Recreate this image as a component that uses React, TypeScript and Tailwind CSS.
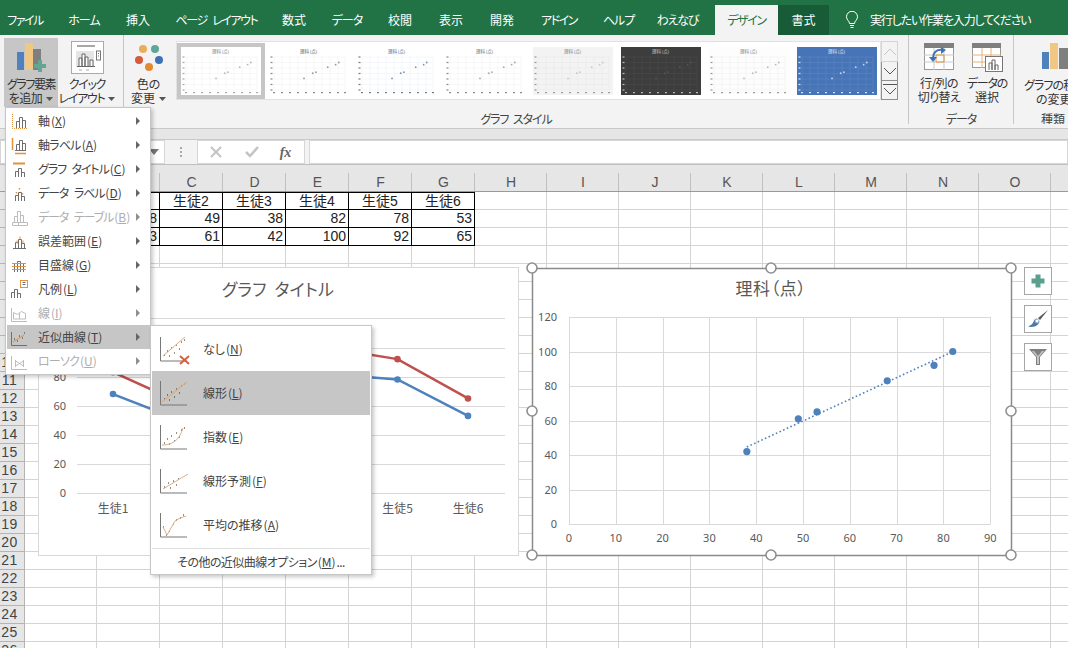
import React from "react";

const COLS = [
  { l: "", w: "w-[72px]" }, { l: "", w: "w-[63px]" }, { l: "C", w: "w-[63px]" }, { l: "D", w: "w-[63px]" },
  { l: "E", w: "w-[63px]" }, { l: "F", w: "w-[63px]" }, { l: "G", w: "w-[63px]" }, { l: "H", w: "w-[72px]" },
  { l: "I", w: "w-[72px]" }, { l: "J", w: "w-[72px]" }, { l: "K", w: "w-[72px]" }, { l: "L", w: "w-[72px]" },
  { l: "M", w: "w-[72px]" }, { l: "N", w: "w-[72px]" }, { l: "O", w: "w-[72px]" }, { l: "", w: "w-[72px]" },
];

const TABLE: Record<number, string[]> = {
  0: ["", "生徒2", "生徒3", "生徒4", "生徒5", "生徒6"],
  1: ["68", "49", "38", "82", "78", "53"],
  2: ["83", "61", "42", "100", "92", "65"],
};

const TABS = [
  { t: "ファイル", w: "w-[50px]", k: "tracking-[-1.5px]" }, { t: "ホーム", w: "w-[68px]", k: "tracking-[-1px]" },
  { t: "挿入", w: "w-[40px]", k: "" }, { t: "ページ レイアウト", w: "w-[117px]", k: "tracking-[-1.4px] [word-spacing:4px]" },
  { t: "数式", w: "w-[38px]", k: "" }, { t: "データ", w: "w-[68px]", k: "tracking-[-1px]" },
  { t: "校閲", w: "w-[38px]", k: "" }, { t: "表示", w: "w-[64px]", k: "" },
  { t: "開発", w: "w-[38px]", k: "" }, { t: "アドイン", w: "w-[76px]", k: "tracking-[-1.5px]" },
  { t: "ヘルプ", w: "w-[43px]", k: "tracking-[-1px]" }, { t: "わえなび", w: "w-[75px]", k: "tracking-[-1.2px]" },
];

function Tabs() {
  return (
    <div className="flex h-[35px] shrink-0 items-end bg-[#217346] text-[12px] text-white">
      {TABS.map((x) => (
        <div key={x.t} className={`${x.w} ${x.k} h-[30px] whitespace-nowrap pt-[6px] text-center leading-[18px]`}>{x.t}</div>
      ))}
      <div className="h-[30px] w-[63px] bg-[#f3f3f3] pt-[6px] text-center leading-[18px] tracking-[-1.4px] text-[#217346]">デザイン</div>
      <div className="h-[30px] w-[51px] bg-[#185c37] pt-[6px] text-center leading-[18px]">書式</div>
      <div className="flex h-[30px] items-center pl-[16px] pb-[1px]">
        <svg width="14" height="18" viewBox="0 0 14 18" fill="none" stroke="#fff" strokeWidth="1">
          <path d="M4.5 12.5C4.5 10 1.5 9 1.5 5.8a5.5 5.5 0 0 1 11 0C12.5 9 9.5 10 9.5 12.5ZM5 14.5h4M5.5 16.5h3" />
        </svg>
        <span className="ml-[11px] whitespace-nowrap tracking-[-1.15px]">実行したい作業を入力してください</span>
      </div>
    </div>
  );
}

function Thumb({ bg, line, title, dot, axis }: { bg: string; line: string; title: string; dot: string; axis: string }) {
  const pts: [number, number][] = [[38, 42], [49, 61], [53, 65], [68, 83], [78, 92], [82, 100]];
  return (
    <svg width="80" height="48" viewBox="0 0 80 48" className="block shrink-0">
      <rect width="80" height="48" fill={bg} />
      {[10, 15.5, 21, 26.5, 32, 37.5, 43].map((y) => <path key={y} d={`M5 ${y}H76`} stroke={line} strokeWidth=".5" />)}
      {[5, 13, 21, 29, 37, 45, 53, 61, 69, 76].map((x) => <path key={x} d={`M${x} 10V43`} stroke={line} strokeWidth=".5" />)}
      {[10, 15.5, 21, 26.5, 32, 37.5, 43].map((y) => <rect key={y} x="1.5" y={y - 0.6} width="2" height="1.2" fill={axis} />)}
      {[5, 13, 21, 29, 37, 45, 53, 61, 69, 76].map((x) => <rect key={x} x={x - 1} y="45" width="2" height="1.2" fill={axis} />)}
      {pts.map(([a, b]) => <circle key={a} cx={5 + a * 0.79} cy={43 - b * 0.275} r=".9" fill={dot} />)}
      <text x="40" y="6" textAnchor="middle" fontSize="4.5" fill={title}>理科（点）</text>
    </svg>
  );
}

function Gallery() {
  const items = [
    { bg: "#ffffff", line: "#eeeeee", title: "#777", dot: "#b8b8b8", axis: "#aaa" },
    { bg: "#ffffff", line: "#eeeeee", title: "#555", dot: "#999", axis: "#888" },
    { bg: "#ffffff", line: "#e8edf5", title: "#44608c", dot: "#7d93b5", axis: "#777" },
    { bg: "#ffffff", line: "#eeeeee", title: "#666", dot: "#aaa", axis: "#888" },
    { bg: "#f3f3f3", line: "#e6e6e6", title: "#777", dot: "#c8c8c8", axis: "#999" },
    { bg: "#3d3d3d", line: "#4c4c4c", title: "#ccc", dot: "#555", axis: "#bbb" },
    { bg: "#fdfdfd", line: "#eeeeee", title: "#777", dot: "#bbb", axis: "#999" },
    { bg: "#4674b7", line: "#5f88c4", title: "#e8eef8", dot: "#c5d5eb", axis: "#dce6f3" },
  ];
  return (
    <div className="ml-[3px] mt-[6px] flex h-[59px] w-[705px] items-center gap-[8px] border border-[#e2e2e2] bg-white pl-[4px]">
      {items.map((p, i) => (
        <div key={i} className={i === 0 ? "-mx-[4px] border-[4px] border-[#c6c6c6]" : "ml-0"}>
          <Thumb {...p} />
        </div>
      ))}
    </div>
  );
}

function ScrollArrows() {
  return (
    <div className="mt-[6px] flex w-[17px] flex-col">
      <div className="flex h-[21px] items-center justify-center border border-[#d4d4d4] bg-[#f3f3f3]">
        <svg width="14" height="10" viewBox="0 0 14 10" fill="none" stroke="#c6c6c6"><path d="M1 8l6-6 6 6" /></svg>
      </div>
      <div className="flex h-[19px] items-center justify-center border-x border-b border-[#8f8f8f] bg-[#f3f3f3]">
        <svg width="14" height="10" viewBox="0 0 14 10" fill="none" stroke="#555"><path d="M1 2l6 6 6-6" /></svg>
      </div>
      <div className="flex h-[19px] flex-col items-center border-x border-b border-[#8f8f8f] bg-[#f3f3f3] pt-[2px]">
        <svg width="14" height="14" viewBox="0 0 14 14" fill="none" stroke="#555"><path d="M0 1.5h14M1 5l6 6 6-6" /></svg>
      </div>
    </div>
  );
}

const GroupLabel = ({ children, extra = "" }: { children: React.ReactNode; extra?: string }) => (
  <div className={`h-[17px] shrink-0 whitespace-nowrap pt-[2px] text-center text-[12px] leading-[17px] tracking-[-1.1px] [word-spacing:3px] text-[#444] ${extra}`}>{children}</div>
);

const Caret = () => (
  <svg width="7" height="4" viewBox="0 0 7 4" className="ml-[4px] inline-block align-[2px]"><path d="M0 0h7L3.5 4z" fill="#555" /></svg>
);

function Ribbon() {
  return (
    <div className="flex h-[94px] shrink-0 border-b border-[#c9c9c9] bg-[#f3f3f3] text-[12px] leading-[14px] text-[#333]">
      <div className="mb-[4px] flex w-[124px] shrink-0 border-r border-[#c6c6c6] pl-[4px] pt-[3px]">
        <div className="flex h-[69px] w-[54px] flex-col items-center bg-[#c6c6c6] pt-[5px]">
          <svg width="30" height="30" viewBox="0 0 30 30" className="shrink-0">
            <rect x="1" y="9" width="7" height="18" fill="#4f81bd" />
            <rect x="9" y="0" width="8" height="27" fill="#f0c884" />
            <rect x="17" y="6" width="8" height="21" fill="#7f7f7f" />
            <path d="M19 24h4v-4h4v4h4v4h-4v4h-4v-4h-4z" transform="translate(-1 -3)" fill="#62a595" />
          </svg>
          <div className="whitespace-nowrap pt-[4px] text-center tracking-[-1.4px]">グラフ要素</div>
          <div className="whitespace-nowrap text-center tracking-[-0.4px]">を追加<Caret /></div>
        </div>
        <div className="flex w-[58px] flex-col items-center pt-[3px]">
          <svg width="33" height="33" viewBox="0 0 33 33" className="shrink-0">
            <rect x=".5" y=".5" width="32" height="32" fill="#fff" stroke="#aaa" />
            <path d="M6 5h18" stroke="#8a8a8a" strokeWidth="1.5" />
            <rect x="5" y="10" width="18" height="16" fill="#e5e5e5" />
            <path d="M8 25V17h3v8M11 25V13h3v12M14 25v-9h3v9M19 25v-6h3v6M6 25.5h18" fill="#fff" stroke="#666" />
            <rect x="25.5" y="10" width="4" height="9" fill="#fff" stroke="#777" />
            <path d="M27 12.5h1M27 15h1" stroke="#777" />
            <path d="M8 29h3M15 29h3" stroke="#aaa" />
          </svg>
          <div className="whitespace-nowrap pt-[3px] text-center tracking-[-1.3px]">クイック</div>
          <div className="whitespace-nowrap text-center tracking-[-1.3px]">レイアウト<Caret /></div>
        </div>
      </div>

      <div className="mb-[4px] flex w-[785px] shrink-0 flex-col border-r border-[#c6c6c6]">
        <div className="flex h-[73px] shrink-0">
          <div className="flex w-[49px] shrink-0 flex-col items-center pt-[8px]">
            <svg width="30" height="30" viewBox="0 0 30 30" className="shrink-0">
              <circle cx="9" cy="6" r="4" fill="#e9ae5b" />
              <circle cx="21" cy="6" r="4" fill="#5fa79a" />
              <circle cx="5" cy="17" r="4" fill="#d65a3c" />
              <circle cx="25" cy="17" r="4" fill="#3f71b5" />
              <circle cx="15" cy="24" r="4" fill="#e28a2f" />
            </svg>
            <div className="whitespace-nowrap pt-[4px] text-center">色の</div>
            <div className="whitespace-nowrap text-center">変更<Caret /></div>
          </div>
          <Gallery />
          <ScrollArrows />
        </div>
        <GroupLabel>グラフ スタイル</GroupLabel>
      </div>

      <div className="mb-[4px] flex w-[105px] shrink-0 flex-col border-r border-[#c6c6c6]">
        <div className="flex h-[73px] shrink-0 pt-[8px]">
          <div className="flex w-[60px] flex-col items-center">
            <svg width="30" height="27" viewBox="0 0 30 27" className="shrink-0">
              <rect x=".5" y=".5" width="29" height="26" fill="#fff" stroke="#999" />
              <rect width="30" height="5" fill="#7f7f7f" />
              <path d="M0 12h30M0 19h30M10 5v22M20 5v22" stroke="#c8c8c8" />
              <path d="M12 12h8M12 19h8M12 12v7M20 12v7" stroke="#e2923c" fill="none" />
              <path d="M19 7c-6-1-10 2-10 9" fill="none" stroke="#3f71b5" strokeWidth="2" />
              <path d="M5 14l4 5 4-5zM17 4l5 3-5 4z" fill="#3f71b5" />
            </svg>
            <div className="whitespace-nowrap pt-[6px] text-center tracking-[-0.6px]">行/列の</div>
            <div className="whitespace-nowrap text-center tracking-[-0.6px]">切り替え</div>
          </div>
          <div className="flex w-[36px] flex-col items-center">
            <svg width="31" height="29" viewBox="0 0 31 29" className="shrink-0">
              <rect x=".5" y=".5" width="28" height="24" fill="#fff" stroke="#999" />
              <rect width="29" height="5" fill="#7f7f7f" />
              <path d="M0 12h29M0 19h29M10 5v20M19 5v20" stroke="#e7b07a" />
              <rect x="13.5" y="13.5" width="17" height="15" fill="#fff" stroke="#777" />
              <path d="M17 27v-7h3v7M20 27V17h3v10M23 27v-5h3v5" fill="#fff" stroke="#666" />
            </svg>
            <div className="whitespace-nowrap pt-[4px] text-center tracking-[-1.2px]">データの</div>
            <div className="whitespace-nowrap text-center">選択</div>
          </div>
        </div>
        <GroupLabel>データ</GroupLabel>
      </div>

      <div className="mb-[4px] flex min-w-0 flex-1 flex-col overflow-hidden">
        <div className="flex h-[73px] shrink-0 flex-col pt-[8px]">
          <svg width="26" height="27" viewBox="0 0 26 27" className="ml-[28px] shrink-0">
            <rect x="0" y="9" width="7" height="17" fill="#4f81bd" />
            <rect x="8" y="0" width="8" height="26" fill="#f0c884" />
            <rect x="17" y="5" width="9" height="21" fill="#7f7f7f" />
          </svg>
          <div className="whitespace-nowrap pl-[10px] pt-[8px] tracking-[-0.9px]">グラフの種類</div>
          <div className="whitespace-nowrap pl-[22px]">の変更</div>
        </div>
        <GroupLabel extra="pl-[24px] !tracking-normal">種類</GroupLabel>
      </div>
    </div>
  );
}

function FormulaBar() {
  return (
    <>
      <div className="h-[11px] shrink-0 border-b border-[#c9c9c9] bg-[#e6e6e6]" />
      <div className="flex h-[24px] shrink-0 items-stretch bg-[#f3f3f3]">
        <div className="flex w-[165px] shrink-0 items-center justify-end border border-[#d6d6d6] bg-white pr-[5px]">
          <svg width="10" height="6" viewBox="0 0 10 6"><path d="M0 0h10L5 6z" fill="#777" /></svg>
        </div>
        <div className="flex w-[32px] shrink-0 items-center justify-center">
          <svg width="3" height="11" viewBox="0 0 3 11" fill="#aaa"><rect x="0" y="0" width="2" height="2" /><rect x="0" y="4" width="2" height="2" /><rect x="0" y="8" width="2" height="2" /></svg>
        </div>
        <div className="flex w-[108px] shrink-0 items-center border border-[#d6d6d6] bg-white">
          <div className="flex w-[36px] justify-center">
            <svg width="12" height="12" viewBox="0 0 12 12" stroke="#c4c4c4" strokeWidth="2"><path d="M1 1l10 10M11 1L1 11" /></svg>
          </div>
          <div className="flex w-[35px] justify-center">
            <svg width="14" height="12" viewBox="0 0 14 12" fill="none" stroke="#c4c4c4" strokeWidth="2.5"><path d="M1 6l4 4 8-9" /></svg>
          </div>
          <div className="flex w-[33px] justify-center font-['Liberation_Serif',serif] text-[14px] font-bold italic text-[#666]">fx</div>
        </div>
        <div className="ml-[4px] flex-1 border border-[#d6d6d6] bg-white" />
      </div>
    </>
  );
}

function Sheet() {
  return (
    <div className="flex flex-1 flex-col overflow-hidden bg-white font-['Liberation_Sans','Noto_Sans_CJK_JP',sans-serif] text-[14px]">
      <div className="flex h-[28px] shrink-0 border-y border-y-[#c0c0c0] border-b-[#9a9a9a] bg-[#e6e6e6] text-[#555]">
        <div className="w-[25px] shrink-0" />
        {COLS.map((c, i) => (
          <div key={i} className={`${c.w} shrink-0 pt-[8px] text-center leading-[18px]`}>
            <div className="relative h-[18px]">
              {c.l}
              <span className="absolute right-0 top-0 h-[18px] w-px bg-[#c0c0c0]" />
            </div>
          </div>
        ))}
      </div>
      {Array.from({ length: 26 }, (_, r) => (
        <div key={r} className="flex h-[18px] shrink-0">
          <div className="w-[25px] shrink-0 border-b border-r border-[#b4b4b4] bg-[#e6e6e6] pr-[5px] text-center text-[14px] leading-[17px] tracking-[0.5px] text-[#444]">{r >= 9 ? r + 1 : ""}</div>
          {COLS.map((c, ci) => {
            const row = TABLE[r];
            const isTable = !!row && ci >= 1 && ci <= 6;
            return (
              <div
                key={ci}
                className={`${c.w} shrink-0 overflow-hidden border-b border-r leading-[17px] text-[#222] ${isTable ? "border-black" : "border-[#d4d4d4]"} ${isTable && r === 0 ? "border-t text-center" : "pr-[2px] text-right"}`}
              >
                {isTable ? row[ci - 1] : ""}
              </div>
            );
          })}
        </div>
      ))}
    </div>
  );
}

function Charts() {
  const num = "font-['Noto_Sans','Liberation_Sans',sans-serif]";
  const xs = [112, 183, 254, 325, 396.5, 467];
  const blue = [68, 49, 38, 82, 78, 53];
  const red = [83, 61, 42, 100, 92, 65];
  const ly = (v: number) => 492 - 1.455 * v;
  const sx = (v: number) => 569 + 4.68 * v;
  const sy = (v: number) => 524 - 1.725 * v;
  const pts: [number, number][] = [[38, 42], [49, 61], [53, 65], [68, 83], [78, 92], [82, 100]];
  const handles: [number, number][] = [[532, 268], [771, 268], [1011, 268], [532, 411], [1011, 411], [532, 555], [771, 555], [1011, 555]];
  return (
    <>
      <div className="absolute left-[38px] top-[267px] h-[289px] w-[481px] border border-[#d9d9d9] bg-white">
        <svg width="481" height="289" viewBox="38 267 481 289" className={num}>
          <text x="277" y="295" textAnchor="middle" fontSize="17" fill="#595959" fontFamily="'Noto Sans CJK JP',sans-serif" letterSpacing=".2" wordSpacing="4">グラフ タイトル</text>
          {[0, 20, 40, 60, 80, 100, 120].map((v) => (
            <g key={v}>
              <path d={`M76 ${Math.round(ly(v)) + 0.5}H504`} stroke="#d9d9d9" />
              {v <= 80 && <text x="65" y={ly(v) + 4} textAnchor="end" fontSize="11" fill="#595959">{v}</text>}
            </g>
          ))}
          <polyline points={xs.map((x, i) => `${x},${ly(blue[i])}`).join(" ")} fill="none" stroke="#4f81bd" strokeWidth="2.5" />
          <polyline points={xs.map((x, i) => `${x},${ly(red[i])}`).join(" ")} fill="none" stroke="#c0504d" strokeWidth="2.5" />
          {xs.map((x, i) => (
            <g key={x}>
              <circle cx={x} cy={ly(blue[i])} r="3.3" fill="#4f81bd" />
              <circle cx={x} cy={ly(red[i])} r="3.3" fill="#c0504d" />
              {(i === 0 || i >= 4) && <text x={x} y="512" textAnchor="middle" fontSize="12" fill="#595959" fontFamily="'Noto Sans CJK JP',sans-serif">生徒{i + 1}</text>}
            </g>
          ))}
        </svg>
      </div>

      <div className="absolute left-[532px] top-[268px] h-[288px] w-[480px] bg-white">
        <svg width="480" height="288" viewBox="532 268 480 288" className={`${num} overflow-visible`}>
          <rect x="532.5" y="268.5" width="479" height="287" fill="#fff" stroke="#8a8a8a" strokeWidth="1.5" />
          <text x="771" y="295" textAnchor="middle" fontSize="17" fill="#595959" fontFamily="'Noto Sans CJK JP',sans-serif" letterSpacing=".6">理科（点）</text>
          {[0, 20, 40, 60, 80, 100, 120].map((v) => (
            <g key={v}>
              <path d={`M569 ${Math.round(sy(v)) + 0.5}H990.5`} stroke="#d9d9d9" />
              <text x="557" y={sy(v) + 4} textAnchor="end" fontSize="11" fill="#595959">{v}</text>
            </g>
          ))}
          {[0, 10, 20, 30, 40, 50, 60, 70, 80, 90].map((v) => (
            <g key={v}>
              <path d={`M${Math.round(sx(v)) + 0.5} 317V524`} stroke="#d9d9d9" />
              <text x={sx(v)} y="542" textAnchor="middle" fontSize="11" fill="#595959">{v}</text>
            </g>
          ))}
          <path d="M746.8 447L952 352" stroke="#4f81bd" strokeWidth="1.6" strokeDasharray="1.6 2.4" />
          {pts.map(([a, b]) => <circle key={a} cx={sx(a)} cy={sy(b)} r="3.6" fill="#4f81bd" />)}
          {handles.map(([x, y]) => (
            <circle key={`${x}-${y}`} cx={x} cy={y} r="5" fill="#fff" stroke="#8f8f8f" strokeWidth="1.6" />
          ))}
        </svg>
      </div>

      <div className="absolute left-[1024px] top-[267px] flex flex-col gap-[10px]">
        <div className="flex h-[28px] w-[28px] items-center justify-center border border-[#a6a6a6] bg-white">
          <svg width="16" height="16" viewBox="0 0 16 16"><path d="M5.5 1.5h5v4h4v5h-4v4h-5v-4h-4v-5h4z" fill="#5b9f8f" /></svg>
        </div>
        <div className="flex h-[28px] w-[28px] items-center justify-center border border-[#a6a6a6] bg-white">
          <svg width="22" height="20" viewBox="0 0 22 20">
            <path d="M21 1L11 9l2 2z" fill="#5a5a5a" />
            <path d="M10 9.5c-3 0-3 3-4.5 5S2 17 1 17.5c4 1 10 .5 11.5-5z" fill="#4f76ad" />
            <circle cx="10" cy="12" r="1.8" fill="#fff" stroke="#a8bcd6" />
          </svg>
        </div>
        <div className="flex h-[28px] w-[28px] items-center justify-center border border-[#a6a6a6] bg-white">
          <svg width="20" height="20" viewBox="0 0 20 20"><path d="M1 2h18l-7 8v8h-4v-8z" fill="#7f7f7f" /><path d="M9 10v7h2v-7L16 4H14L10 9 6 4H4z" fill="#fff" opacity=".55" /></svg>
        </div>
      </div>
    </>
  );
}

const G = "#6f6f6f";
const O = "#e2923c";
const D = "#bdbdbd";

const Bars = ({ c = G }: { c?: string }) => (
  <path d="M7.5 17V10.5h3V17M10.5 17V6.5h3V17M13.5 17V9.5h3V17" fill="none" stroke={c} />
);

const MENU_ICONS: React.ReactNode[] = [
  <><Bars /><path d="M3.5 3v14.5H19" fill="none" stroke={O} strokeDasharray="1 1" /></>,
  <><path d="M7.5 15V9.5h3V15M10.5 15V5.5h3V15M13.5 15V8.5h3V15M6 15.5h11" fill="none" stroke={G} /><path d="M3.5 3v12M6 18.5h11" stroke={O} strokeWidth="1.5" /></>,
  <><path d="M6.5 18V12.5h3V18M9.5 18V9.5h3V18M12.5 18v-4.5h3V18" fill="none" stroke={G} /><path d="M4 4.5h12" stroke={O} strokeWidth="2" /></>,
  <><path d="M6.5 18V12.5h3V18M9.5 18V9.5h3V18M12.5 18v-4.5h3V18" fill="none" stroke={G} /><path d="M7.5 9v1.5M10.5 5v1.5M13.5 10v1.5" stroke={O} strokeWidth="1.5" /></>,
  <><path d="M5.5 15V9.5h3V15M8.5 15V4.5h3V15M11.5 15V8.5h3V15" fill="none" stroke={D} /><path d="M3.5 15.5h15v3h-15zM9.5 15.5v3" fill="none" stroke={D} /></>,
  <><path d="M6.5 17V11.5h3V17M9.5 17V8.5h3V17M12.5 17v-4.5h3V17M4 17.5h13" fill="none" stroke={G} /><path d="M8 9.5v3M11 5.5v3M14 9.5v3" stroke={O} /></>,
  <><path d="M5.5 17V8.5h3V17M8.5 17V6.5h3V17M11.5 17V8.5h3V17" fill="none" stroke={G} /><path d="M3 8.5h14M3 11.5h14M3 14.5h14" stroke={O} /></>,
  <><path d="M2.5 19v-5.5h3V19M5.5 19v-8.5h3V19M8.5 19v-4.5h3V19" fill="none" stroke={G} /><rect x="11.5" y="1.5" width="7" height="7" fill="#fff" stroke={O} /><path d="M13.5 3.5h3M13.5 5.5h3" stroke={G} /></>,
  <><path d="M2.5 5v13.5H18" fill="none" stroke={D} /><path d="M4.5 16V9.5l4 2 4-3 4 2V16zM10.5 10v6" fill="none" stroke={D} /></>,
  <><path d="M2.5 5v13.5H18" fill="none" stroke={G} /><path d="M4 15l11-7" stroke={O} /><path d="M5 12h1M8 14h1M10 9h1M13 11h1M15 6h1" stroke="#333" /></>,
  <><path d="M2.5 5v13.5H18" fill="none" stroke={D} /><path d="M6.5 9v7M14.5 9v7" stroke={D} /><path d="M6.5 10l8 5M14.5 10l-8 5" stroke={D} /></>,
];

const MENU = [
  { t: "軸", k: "X", s: "" }, { t: "軸ラベル", k: "A", s: "tracking-[-0.8px]" }, { t: "グラフ タイトル", k: "C", s: "tracking-[-1.1px] [word-spacing:4px]" }, { t: "データ ラベル", k: "D", s: "tracking-[-1.1px] [word-spacing:4px]" },
  { t: "データ テーブル", k: "B", off: true, s: "tracking-[-1.1px] [word-spacing:4px]" }, { t: "誤差範囲", k: "E", s: "" }, { t: "目盛線", k: "G", s: "" }, { t: "凡例", k: "L", s: "" },
  { t: "線", k: "I", off: true, s: "" }, { t: "近似曲線", k: "T", on: true, s: "" }, { t: "ローソク", k: "U", off: true, s: "tracking-[-0.8px]" },
];

const Key = ({ k }: { k: string }) => (
  <span className="px-[1px] tracking-normal">(<u>{k}</u>)</span>
);

function Menu() {
  return (
    <div className="absolute left-[5px] top-[107px] flex h-[268px] w-[146px] flex-col border border-[#c6c6c6] bg-white py-[1px] pl-[1px] text-[12px] shadow-[2px_2px_4px_rgba(0,0,0,0.22)]">
      {MENU.map((m, i) => (
        <div key={m.t} className={`flex h-[24px] shrink-0 items-center ${m.on ? "bg-[#c6c6c6]" : ""} ${m.off ? "text-[#aeaeae]" : "text-[#444]"}`}>
          <svg width="20" height="20" viewBox="0 0 20 20" className="ml-[2px] shrink-0">{MENU_ICONS[i]}</svg>
          <span className={`ml-[9px] flex-1 whitespace-nowrap ${m.s}`}>{m.t}<Key k={m.k} /></span>
          <svg width="4" height="8" viewBox="0 0 4 8" className="mr-[10px] shrink-0"><path d="M0 0l4 4-4 4z" fill={m.off ? "#8f8f8f" : "#666"} /></svg>
        </div>
      ))}
    </div>
  );
}

const Axis = () => <path d="M.5 3v24H27" fill="none" stroke="#777" />;
const Dots = () => (
  <path d="M4 21h1M7 17h1M9 22h1M11 14h1M14 19h1M16 11h1M19 15h1M21 8h1M24 6h1" stroke="#222" />
);

const SUB_ICONS: React.ReactNode[] = [
  <><Axis /><Dots /><path d="M3 22L25 3" stroke="#dcaf86" /><path d="M20 22l9 8M29 22l-9 8" stroke="#d9603f" strokeWidth="2" /></>,
  <><Axis /><Dots /><path d="M2 24L27 4" stroke="#dcaf86" strokeWidth="1.5" /></>,
  <><Axis /><Dots /><path d="M2 23c10 0 17-4 21-17" fill="none" stroke="#dcaf86" /></>,
  <><Axis /><path d="M4 21h1M8 17h1M10 22h1M13 15h1M16 19h1M18 13h1" stroke="#222" /><path d="M3 23L28 8" stroke="#dcaf86" /></>,
  <><Axis /><path d="M3 17h1M6 25h1M9 21h1M13 14h1M16 10h1M20 8h1M23 5h1" stroke="#222" /><path d="M3 17l4 8 8-14 5-3 6-2" fill="none" stroke="#dcaf86" /></>,
];

const SUB = [
  { t: "なし", k: "N" }, { t: "線形", k: "L", on: true }, { t: "指数", k: "E" }, { t: "線形予測", k: "F" }, { t: "平均の推移", k: "A" },
];

function SubMenu() {
  return (
    <div className="absolute left-[150px] top-[325px] flex h-[250px] w-[222px] flex-col border border-[#c6c6c6] bg-white p-px text-[12px] text-[#444] shadow-[2px_2px_4px_rgba(0,0,0,0.22)]">
      {SUB.map((s, i) => (
        <div key={s.t} className={`flex h-[44px] shrink-0 items-center ${s.on ? "bg-[#c6c6c6]" : ""}`}>
          <svg width="31" height="31" viewBox="0 0 31 31" className="ml-[8px] shrink-0">{SUB_ICONS[i]}</svg>
          <span className="ml-[12px] whitespace-nowrap">{s.t}<Key k={s.k} /></span>
        </div>
      ))}
      <div className="mt-[1px] flex-1 border-t border-[#e0e0e0] text-center leading-[26px] tracking-[-0.55px]">その他の近似曲線オプション<Key k="M" />...</div>
    </div>
  );
}

export default function App() {
  return (
    <div className="relative flex h-[648px] w-[1068px] flex-col overflow-hidden bg-white font-['Noto_Sans_CJK_JP','Liberation_Sans',sans-serif] [font-feature-settings:'palt']">
      <Tabs />
      <Ribbon />
      <FormulaBar />
      <Sheet />
      <Charts />
      <Menu />
      <SubMenu />
    </div>
  );
}
